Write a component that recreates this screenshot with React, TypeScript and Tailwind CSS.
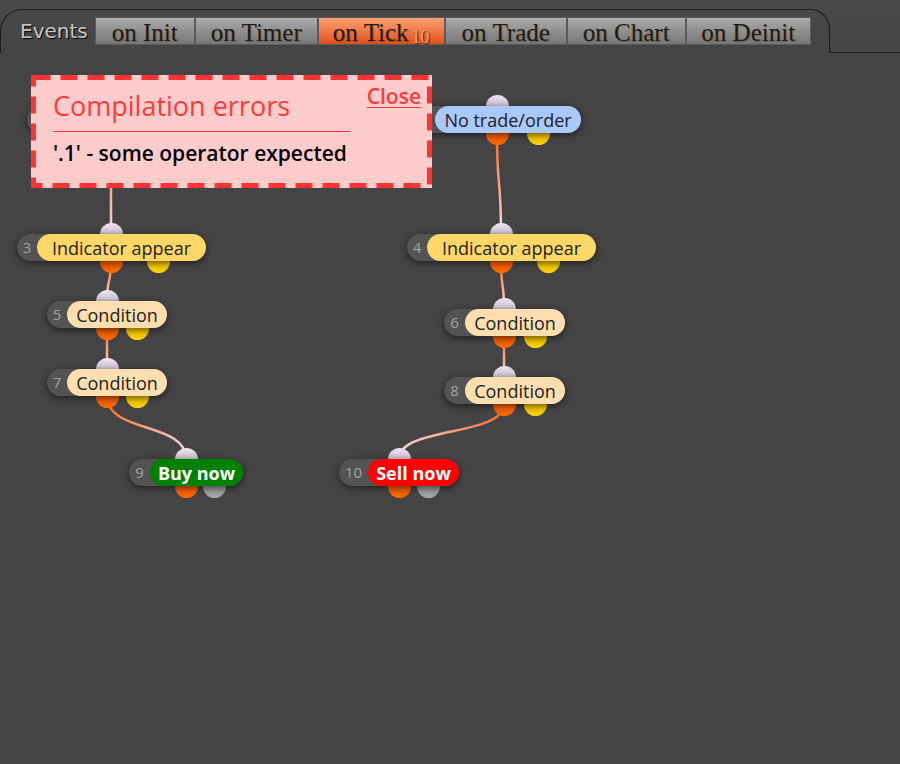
import React from 'react';

type Out = { x: number; kind: 'orange' | 'yellow' | 'gray' };

type FlowNode = {
  id: number;
  label: string;
  left: number;
  split: number;
  right: number;
  top: number;
  input: number;
  outs: Out[];
  pill: string;
};

// canvas starts below the tab strip
const OY = 53;
const H = 27;
const R = 11.5;

// node 1 sits under the error box, so its label is left out
const nodes: FlowNode[] = [
  { id: 1, label: '', left: 27, split: 47, right: 196, top: 106, input: 111, outs: [{ x: 111, kind: 'orange' }, { x: 152, kind: 'yellow' }], pill: 'bg-[#a9c9ff] text-[#222]' },
  { id: 2, label: 'No trade/order', left: 413, split: 435, right: 581, top: 106, input: 497, outs: [{ x: 497, kind: 'orange' }, { x: 538, kind: 'yellow' }], pill: 'bg-[#a9c9ff] text-[#222]' },
  { id: 3, label: 'Indicator appear', left: 17, split: 37, right: 206, top: 234, input: 111, outs: [{ x: 111, kind: 'orange' }, { x: 158, kind: 'yellow' }], pill: 'bg-[#ffd766] text-[#222]' },
  { id: 4, label: 'Indicator appear', left: 407, split: 427, right: 596, top: 234, input: 501, outs: [{ x: 501, kind: 'orange' }, { x: 548, kind: 'yellow' }], pill: 'bg-[#ffd766] text-[#222]' },
  { id: 5, label: 'Condition', left: 47, split: 67, right: 167, top: 301, input: 107, outs: [{ x: 107, kind: 'orange' }, { x: 137, kind: 'yellow' }], pill: 'bg-[#ffdfb0] text-[#222]' },
  { id: 6, label: 'Condition', left: 444, split: 465, right: 565, top: 309, input: 504, outs: [{ x: 504, kind: 'orange' }, { x: 535, kind: 'yellow' }], pill: 'bg-[#ffdfb0] text-[#222]' },
  { id: 7, label: 'Condition', left: 47, split: 67, right: 167, top: 369, input: 107, outs: [{ x: 107, kind: 'orange' }, { x: 137, kind: 'yellow' }], pill: 'bg-[#ffdfb0] text-[#222]' },
  { id: 8, label: 'Condition', left: 444, split: 465, right: 565, top: 377, input: 504, outs: [{ x: 504, kind: 'orange' }, { x: 535, kind: 'yellow' }], pill: 'bg-[#ffdfb0] text-[#222]' },
  { id: 9, label: 'Buy now', left: 129, split: 150, right: 243, top: 459, input: 186, outs: [{ x: 186, kind: 'orange' }, { x: 214, kind: 'gray' }], pill: 'bg-[#008000] text-white font-bold' },
  { id: 10, label: 'Sell now', left: 339, split: 368, right: 459, top: 459, input: 399, outs: [{ x: 399, kind: 'orange' }, { x: 428, kind: 'gray' }], pill: 'bg-[#ff0000] text-white font-bold' },
];

const links: [number, number][] = [
  [1, 3],
  [2, 4],
  [3, 5],
  [4, 6],
  [5, 7],
  [6, 8],
  [7, 9],
  [8, 10],
];

const outColor: Record<Out['kind'], string> = {
  orange: 'bg-gradient-to-b from-[#d84800] to-[#ff6a00]',
  yellow: 'bg-gradient-to-b from-[#d9a800] to-[#ffd400]',
  gray: 'bg-gradient-to-b from-[#7a7a7a] to-[#a8a8a8]',
};

const tabs = [
  { name: 'on Init', w: 'w-[100px]' },
  { name: 'on Timer', w: 'w-[123px]' },
  { name: 'on Tick', w: 'w-[127px]', active: true, count: 10 },
  { name: 'on Trade', w: 'w-[122px]' },
  { name: 'on Chart', w: 'w-[119px]' },
  { name: 'on Deinit', w: 'w-[125px]' },
];

const Links: React.FC = () => {
  const byId = (id: number) => nodes.find((n) => n.id === id)!;
  return (
    <svg className="absolute inset-0 w-full h-full" width={900} height={711}>
      <defs>
        {links.map(([a, b]) => {
          const s = byId(a);
          const t = byId(b);
          return (
            <linearGradient
              key={`g${a}`}
              id={`link${a}`}
              gradientUnits="userSpaceOnUse"
              x1={s.outs[0].x}
              y1={s.top + H - OY}
              x2={t.input}
              y2={t.top - OY}
            >
              <stop offset="0" stopColor="#ff6418" />
              <stop offset="1" stopColor="#f4dcea" />
            </linearGradient>
          );
        })}
      </defs>
      {links.map(([a, b]) => {
        const s = byId(a);
        const t = byId(b);
        const x1 = s.outs[0].x;
        const y1 = s.top + H - OY;
        const x2 = t.input;
        const y2 = t.top - OY;
        const dy = (y2 - y1) * 0.6;
        return (
          <path
            key={a}
            d={`M${x1},${y1} C${x1},${y1 + dy} ${x2},${y2 - dy} ${x2},${y2}`}
            fill="none"
            stroke={`url(#link${a})`}
            strokeWidth={2.5}
          />
        );
      })}
    </svg>
  );
};

const Node: React.FC<{ n: FlowNode }> = ({ n }) => (
  <div
    className="absolute"
    style={{ left: n.left, top: n.top - OY, width: n.right - n.left, height: H }}
  >
    <div
      className="absolute w-[23px] h-[23px] rounded-full bg-gradient-to-b from-[#efe6f0] to-[#a595ae]"
      style={{ left: n.input - n.left - R, top: -R }}
    />
    {n.outs.map((o) => (
      <div
        key={o.x}
        className={`absolute w-[23px] h-[23px] rounded-full ${outColor[o.kind]}`}
        style={{ left: o.x - n.left - R, top: H - R }}
      />
    ))}
    <div className="absolute inset-0 rounded-full bg-[#535353] shadow-[0_2px_7px_rgba(0,0,0,0.55)]" />
    <div
      className="absolute top-0 bottom-0 left-0 flex items-center justify-center text-[15px] text-[#a3a3a3]"
      style={{ width: n.split - n.left }}
    >
      {n.id}
    </div>
    <div
      className={`absolute top-0 bottom-0 right-0 flex items-center justify-center rounded-full text-[18px] leading-none ${n.pill}`}
      style={{ left: n.split - n.left }}
    >
      {n.label}
    </div>
  </div>
);

// dashed red frame of the error box
const DashedFrame: React.FC = () => (
  <svg className="absolute inset-0" width={401} height={113}>
    <rect
      x={2.5}
      y={2.5}
      width={396}
      height={108}
      fill="none"
      stroke="#ff3333"
      strokeWidth={5}
      strokeDasharray="17 10"
    />
  </svg>
);

export default function App() {
  return (
    <div className="w-[900px] h-[764px] overflow-hidden bg-[#444] font-['Open_Sans','Noto_Sans',sans-serif]">
      <div className="flex pt-[9px] bg-gradient-to-b from-[#4a4a4a] to-[#444]">
        <div className="w-[830px] h-[44px] border-t border-l border-r border-[#1c1c1c] rounded-tl-[22px] rounded-tr-[20px] flex items-start pt-[7px] pl-[19px]">
          <span className="h-[28px] flex items-center pr-[7px] text-[20px] text-[#c6c6c6] font-['DejaVu_Sans',sans-serif] [text-shadow:1px_1px_1px_#000]">
            Events
          </span>
          {tabs.map((t) => (
            <div
              key={t.name}
              className={`${t.w} h-[28px] border border-[#5a5a5a] flex items-center justify-center font-['Liberation_Serif',serif] text-[25px] leading-none text-[#1b1b1b] [text-shadow:1px_1px_1px_rgba(110,60,20,0.45)] ${
                t.active
                  ? 'bg-gradient-to-b from-[#ffa070] to-[#e04e14]'
                  : 'bg-gradient-to-b from-[#ababab] to-[#767676]'
              }`}
            >
              <span className="pt-[2px]">{t.name}</span>
              {t.count && (
                <span className="ml-[3px] mt-[12px] text-[18px] text-[#e7a47a] [text-shadow:1px_1px_1px_#4a1a00]">
                  {t.count}
                </span>
              )}
            </div>
          ))}
        </div>
        <div className="flex-1 h-[44px] border-b border-[#1c1c1c]" />
      </div>

      <div className="relative h-[711px]">
        <Links />
        {nodes.map((n) => (
          <Node key={n.id} n={n} />
        ))}

        <div className="absolute left-[31px] top-[22px] w-[401px] h-[113px] bg-[#ffcccc] pl-[22px] pr-[11px]">
          <DashedFrame />
          <div className="relative flex items-start justify-between">
            <div className="w-[297px] pt-[14px]">
              <div className="text-[27px] leading-[33px] font-medium text-[#ff3a3a]">Compilation errors</div>
              <div className="mt-[9px] h-px bg-[#ff3a3a]" />
              <div className="mt-[8px] text-[21px] leading-[26px] font-semibold text-black">
                '.1' - some operator expected
              </div>
            </div>
            <span className="mt-[8px] text-[21px] leading-[26px] font-semibold text-[#ff3a3a] underline underline-offset-[3px] decoration-1">
              Close
            </span>
          </div>
        </div>
      </div>
    </div>
  );
}
